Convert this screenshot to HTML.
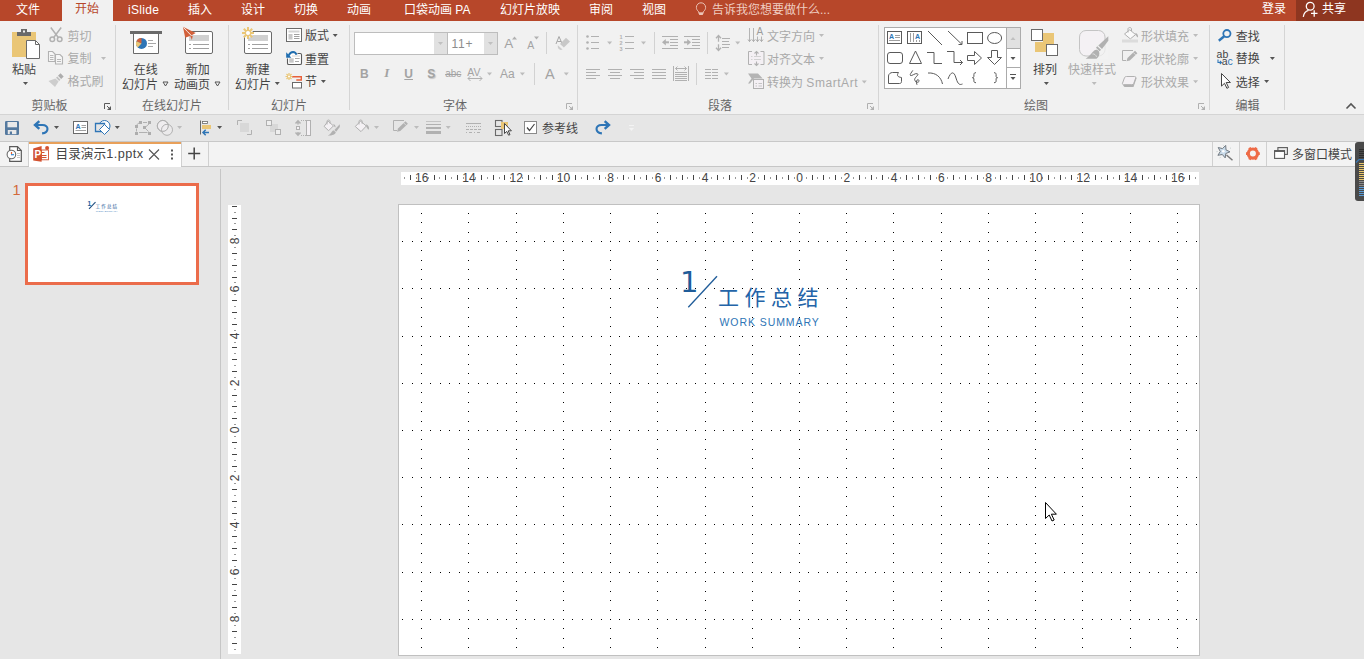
<!DOCTYPE html><html><head><meta charset="utf-8"><title>PowerPoint</title><style>
html,body{margin:0;padding:0}
body{width:1364px;height:659px;overflow:hidden;position:relative;background:#E6E6E6;
 font-family:"Liberation Sans","Noto Sans CJK SC",sans-serif;font-size:12px;color:#444}
.a{position:absolute}
.t{position:absolute;white-space:nowrap;line-height:16px;height:16px}
.d{color:#A9A9A9}
.d2{color:#A3A3A3}
.g{color:#666}
.w{color:#fff}
svg{position:absolute;left:0;top:0;overflow:visible}
</style></head><body><div class="a" style="left:0px;top:0px;width:1364px;height:21px;background:#B7472A;"></div>
<div class="a" style="left:62px;top:0px;width:51px;height:21px;background:#F1F1F1;"></div>
<div class="a" style="left:1296px;top:0px;width:68px;height:21px;background:#8E3620;"></div>
<div class="a" style="left:0px;top:21px;width:1364px;height:93px;background:#F1F1F1;"></div>
<div class="a" style="left:0px;top:114px;width:1364px;height:1px;background:#D4D4D4;"></div>
<div class="a" style="left:0px;top:115px;width:1364px;height:26px;background:#E6E6E6;"></div>
<div class="a" style="left:0px;top:141px;width:1364px;height:1px;background:#C8C8C8;"></div>
<div class="a" style="left:0px;top:142px;width:1364px;height:24px;background:#F3F3F3;"></div>
<div class="a" style="left:0px;top:166px;width:1364px;height:1px;background:#C6C6C6;"></div>
<div class="a" style="left:29px;top:142px;width:152px;height:25px;background:#FFFFFF;border-top:2px solid #E8A05A;box-sizing:border-box;"></div>
<div class="a" style="left:28px;top:142px;width:1px;height:24px;background:#D0D0D0;"></div>
<div class="a" style="left:181px;top:142px;width:1px;height:24px;background:#D0D0D0;"></div>
<div class="a" style="left:208px;top:142px;width:1px;height:24px;background:#D0D0D0;"></div>
<div class="a" style="left:1212px;top:142px;width:1px;height:24px;background:#D0D0D0;"></div>
<div class="a" style="left:1239px;top:142px;width:1px;height:24px;background:#D0D0D0;"></div>
<div class="a" style="left:1266px;top:142px;width:1px;height:24px;background:#D0D0D0;"></div>
<div class="a" style="left:220px;top:169px;width:1px;height:490px;background:#C6C6C6;"></div>
<div class="a" style="left:354px;top:32px;width:93px;height:23px;background:#fff;border:1px solid #BDBDBD;box-sizing:border-box;"></div>
<div class="a" style="left:434px;top:33px;width:13px;height:21px;background:#E1E1E1;"></div>
<div class="a" style="left:447px;top:32px;width:51px;height:23px;background:#fff;border:1px solid #BDBDBD;box-sizing:border-box;"></div>
<div class="a" style="left:484px;top:33px;width:13px;height:21px;background:#E1E1E1;"></div>
<div class="a" style="left:884px;top:27px;width:137px;height:62px;background:#fff;border:1px solid #ABABAB;box-sizing:border-box;"></div>
<div class="a" style="left:1006px;top:28px;width:14px;height:20px;background:#E1E1E1;"></div>
<div class="a" style="left:1006px;top:48px;width:14px;height:1px;background:#ABABAB;"></div>
<div class="a" style="left:1006px;top:67px;width:14px;height:1px;background:#ABABAB;"></div>
<div class="a" style="left:1006px;top:28px;width:1px;height:60px;background:#ABABAB;"></div>
<div class="t w" style="left:16px;top:2px;">文件</div>
<div class="t w" style="left:128px;top:2px;"><span style="letter-spacing:.3px">iSlide</span></div>
<div class="t w" style="left:188px;top:2px;">插入</div>
<div class="t w" style="left:241px;top:2px;">设计</div>
<div class="t w" style="left:294px;top:2px;">切换</div>
<div class="t w" style="left:347px;top:2px;">动画</div>
<div class="t w" style="left:404px;top:2px;">口袋动画 PA</div>
<div class="t w" style="left:500px;top:2px;">幻灯片放映</div>
<div class="t w" style="left:589px;top:2px;">审阅</div>
<div class="t w" style="left:642px;top:2px;">视图</div>
<div class="t w" style="left:1262px;top:1px;">登录</div>
<div class="t w" style="left:1322px;top:1px;">共享</div>
<div class="t " style="left:75px;top:1px;color:#B7472A;">开始</div>
<div class="t " style="left:712px;top:2px;color:#EFCDC1;">告诉我您想要做什么...</div>
<div class="a" style="left:115px;top:25px;width:1px;height:85px;background:#D5D5D5;"></div>
<div class="a" style="left:228px;top:25px;width:1px;height:85px;background:#D5D5D5;"></div>
<div class="a" style="left:349px;top:25px;width:1px;height:85px;background:#D5D5D5;"></div>
<div class="a" style="left:577px;top:25px;width:1px;height:85px;background:#D5D5D5;"></div>
<div class="a" style="left:878px;top:25px;width:1px;height:85px;background:#D5D5D5;"></div>
<div class="a" style="left:1209px;top:25px;width:1px;height:85px;background:#D5D5D5;"></div>
<div class="a" style="left:1284px;top:25px;width:1px;height:85px;background:#D5D5D5;"></div>
<div class="a" style="left:546px;top:32px;width:1px;height:22px;background:#D2D2D2;"></div>
<div class="a" style="left:654px;top:32px;width:1px;height:22px;background:#D2D2D2;"></div>
<div class="a" style="left:707px;top:32px;width:1px;height:22px;background:#D2D2D2;"></div>
<div class="a" style="left:534px;top:63px;width:1px;height:22px;background:#D2D2D2;"></div>
<div class="a" style="left:696px;top:63px;width:1px;height:22px;background:#D2D2D2;"></div>
<div class="t g" style="left:31.5px;top:98px;">剪贴板</div>
<div class="t g" style="left:142px;top:98px;">在线幻灯片</div>
<div class="t g" style="left:271px;top:98px;">幻灯片</div>
<div class="t g" style="left:443px;top:98px;">字体</div>
<div class="t g" style="left:708px;top:98px;">段落</div>
<div class="t g" style="left:1024px;top:98px;">绘图</div>
<div class="t g" style="left:1235.5px;top:98px;">编辑</div>
<div class="t " style="left:12px;top:62px;">粘贴</div>
<div class="t d" style="left:67.5px;top:29px;">剪切</div>
<div class="t d" style="left:67.5px;top:51px;">复制</div>
<div class="t d" style="left:67.5px;top:74px;">格式刷</div>
<div class="t " style="left:133.8px;top:62px;">在线</div>
<div class="t " style="left:122px;top:77px;">幻灯片</div>
<div class="t " style="left:185.8px;top:62px;">新加</div>
<div class="t " style="left:174px;top:77px;">动画页</div>
<div class="t " style="left:245.8px;top:62px;">新建</div>
<div class="t " style="left:235px;top:77px;">幻灯片</div>
<div class="t " style="left:305px;top:28px;">版式</div>
<div class="t " style="left:305px;top:52px;">重置</div>
<div class="t " style="left:305px;top:74px;">节</div>
<div class="t d" style="left:767px;top:29px;">文字方向</div>
<div class="t d" style="left:767px;top:52px;">对齐文本</div>
<div class="t d" style="left:767px;top:75px;">转换为 <span style="letter-spacing:.55px">SmartArt</span></div>
<div class="t " style="left:1033px;top:62px;">排列</div>
<div class="t d" style="left:1068px;top:62px;">快速样式</div>
<div class="t d" style="left:1141px;top:29px;">形状填充</div>
<div class="t d" style="left:1141px;top:52px;">形状轮廓</div>
<div class="t d" style="left:1141px;top:75px;">形状效果</div>
<div class="t " style="left:1235.7px;top:29px;">查找</div>
<div class="t " style="left:1235.7px;top:51px;">替换</div>
<div class="t " style="left:1235.7px;top:75px;">选择</div>
<div class="t " style="left:451.5px;top:35.64px;font-size:12px;color:#8C8C8C;letter-spacing:.8px;">11+</div>
<div class="t d2" style="left:360px;top:65.54px;font-size:12px;font-weight:bold;">B</div>
<div class="t d2" style="left:384.3px;top:65.20px;font-size:13px;font-style:italic;font-weight:bold;font-family:'Liberation Serif',serif;">I</div>
<div class="t d2" style="left:404.3px;top:65.54px;font-size:12px;font-weight:bold;text-decoration:underline;">U</div>
<div class="t d2" style="left:427.2px;top:65.54px;font-size:12px;font-weight:bold;text-shadow:1px 1px 1px #c4c4c4;">S</div>
<div class="t d2" style="left:445.2px;top:66.23px;font-size:10px;text-decoration:line-through;">abc</div>
<div class="t d2" style="left:467.3px;top:63.56px;font-size:10.5px;">AV</div>
<div class="t d2" style="left:500px;top:65.54px;font-size:12px;">Aa</div>
<div class="t d2" style="left:545px;top:65.78px;font-size:14.5px;">A</div>
<div class="t d2" style="left:504.2px;top:36.12px;font-size:13.5px;">A</div>
<div class="t d2" style="left:527.2px;top:37.16px;font-size:10.5px;">A</div>
<div class="t " style="left:542px;top:121px;">参考线</div>
<div class="t " style="left:55.5px;top:146px;font-size:12.7px;">目录演示<span style="letter-spacing:.45px">1.pptx</span></div>
<div class="t " style="left:1292px;top:147px;">多窗口模式</div>
<div class="t " style="left:12.5px;top:181.58px;font-size:14.5px;color:#D2693A;">1</div>
<div class="a" style="left:25px;top:183px;width:174px;height:102px;background:#fff;border:3px solid #EB6C4B;box-sizing:border-box;"></div>
<div class="a" style="left:401px;top:172px;width:798px;height:13px;background:#fff;"></div>
<div class="a" style="left:228px;top:205px;width:13px;height:449px;background:#fff;"></div>
<div class="a" style="left:398px;top:204px;width:802px;height:452px;background:#fff;border:1px solid #C0C0C0;box-sizing:border-box;"></div>
<svg width="1364" height="659" shape-rendering="crispEdges"><path d="M402 241.5h1M402 288.5h1M402 336.5h1M402 383.5h1M402 430.5h1M402 477.5h1M402 524.5h1M402 572.5h1M402 619.5h1M412 241.5h1M412 288.5h1M412 336.5h1M412 383.5h1M412 430.5h1M412 477.5h1M412 524.5h1M412 572.5h1M412 619.5h1M421 213.5h1M421 222.5h1M421 232.5h1M421 241.5h1M421 250.5h1M421 260.5h1M421 269.5h1M421 279.5h1M421 288.5h1M421 298.5h1M421 307.5h1M421 317.5h1M421 326.5h1M421 336.5h1M421 345.5h1M421 354.5h1M421 364.5h1M421 373.5h1M421 383.5h1M421 392.5h1M421 402.5h1M421 411.5h1M421 421.5h1M421 430.5h1M421 439.5h1M421 449.5h1M421 458.5h1M421 468.5h1M421 477.5h1M421 487.5h1M421 496.5h1M421 506.5h1M421 515.5h1M421 524.5h1M421 534.5h1M421 543.5h1M421 553.5h1M421 562.5h1M421 572.5h1M421 581.5h1M421 591.5h1M421 600.5h1M421 610.5h1M421 619.5h1M421 628.5h1M421 638.5h1M421 647.5h1M430 241.5h1M430 288.5h1M430 336.5h1M430 383.5h1M430 430.5h1M430 477.5h1M430 524.5h1M430 572.5h1M430 619.5h1M440 241.5h1M440 288.5h1M440 336.5h1M440 383.5h1M440 430.5h1M440 477.5h1M440 524.5h1M440 572.5h1M440 619.5h1M449 241.5h1M449 288.5h1M449 336.5h1M449 383.5h1M449 430.5h1M449 477.5h1M449 524.5h1M449 572.5h1M449 619.5h1M459 241.5h1M459 288.5h1M459 336.5h1M459 383.5h1M459 430.5h1M459 477.5h1M459 524.5h1M459 572.5h1M459 619.5h1M468 213.5h1M468 222.5h1M468 232.5h1M468 241.5h1M468 250.5h1M468 260.5h1M468 269.5h1M468 279.5h1M468 288.5h1M468 298.5h1M468 307.5h1M468 317.5h1M468 326.5h1M468 336.5h1M468 345.5h1M468 354.5h1M468 364.5h1M468 373.5h1M468 383.5h1M468 392.5h1M468 402.5h1M468 411.5h1M468 421.5h1M468 430.5h1M468 439.5h1M468 449.5h1M468 458.5h1M468 468.5h1M468 477.5h1M468 487.5h1M468 496.5h1M468 506.5h1M468 515.5h1M468 524.5h1M468 534.5h1M468 543.5h1M468 553.5h1M468 562.5h1M468 572.5h1M468 581.5h1M468 591.5h1M468 600.5h1M468 610.5h1M468 619.5h1M468 628.5h1M468 638.5h1M468 647.5h1M478 241.5h1M478 288.5h1M478 336.5h1M478 383.5h1M478 430.5h1M478 477.5h1M478 524.5h1M478 572.5h1M478 619.5h1M487 241.5h1M487 288.5h1M487 336.5h1M487 383.5h1M487 430.5h1M487 477.5h1M487 524.5h1M487 572.5h1M487 619.5h1M497 241.5h1M497 288.5h1M497 336.5h1M497 383.5h1M497 430.5h1M497 477.5h1M497 524.5h1M497 572.5h1M497 619.5h1M506 241.5h1M506 288.5h1M506 336.5h1M506 383.5h1M506 430.5h1M506 477.5h1M506 524.5h1M506 572.5h1M506 619.5h1M516 213.5h1M516 222.5h1M516 232.5h1M516 241.5h1M516 250.5h1M516 260.5h1M516 269.5h1M516 279.5h1M516 288.5h1M516 298.5h1M516 307.5h1M516 317.5h1M516 326.5h1M516 336.5h1M516 345.5h1M516 354.5h1M516 364.5h1M516 373.5h1M516 383.5h1M516 392.5h1M516 402.5h1M516 411.5h1M516 421.5h1M516 430.5h1M516 439.5h1M516 449.5h1M516 458.5h1M516 468.5h1M516 477.5h1M516 487.5h1M516 496.5h1M516 506.5h1M516 515.5h1M516 524.5h1M516 534.5h1M516 543.5h1M516 553.5h1M516 562.5h1M516 572.5h1M516 581.5h1M516 591.5h1M516 600.5h1M516 610.5h1M516 619.5h1M516 628.5h1M516 638.5h1M516 647.5h1M525 241.5h1M525 288.5h1M525 336.5h1M525 383.5h1M525 430.5h1M525 477.5h1M525 524.5h1M525 572.5h1M525 619.5h1M534 241.5h1M534 288.5h1M534 336.5h1M534 383.5h1M534 430.5h1M534 477.5h1M534 524.5h1M534 572.5h1M534 619.5h1M544 241.5h1M544 288.5h1M544 336.5h1M544 383.5h1M544 430.5h1M544 477.5h1M544 524.5h1M544 572.5h1M544 619.5h1M553 241.5h1M553 288.5h1M553 336.5h1M553 383.5h1M553 430.5h1M553 477.5h1M553 524.5h1M553 572.5h1M553 619.5h1M563 213.5h1M563 222.5h1M563 232.5h1M563 241.5h1M563 250.5h1M563 260.5h1M563 269.5h1M563 279.5h1M563 288.5h1M563 298.5h1M563 307.5h1M563 317.5h1M563 326.5h1M563 336.5h1M563 345.5h1M563 354.5h1M563 364.5h1M563 373.5h1M563 383.5h1M563 392.5h1M563 402.5h1M563 411.5h1M563 421.5h1M563 430.5h1M563 439.5h1M563 449.5h1M563 458.5h1M563 468.5h1M563 477.5h1M563 487.5h1M563 496.5h1M563 506.5h1M563 515.5h1M563 524.5h1M563 534.5h1M563 543.5h1M563 553.5h1M563 562.5h1M563 572.5h1M563 581.5h1M563 591.5h1M563 600.5h1M563 610.5h1M563 619.5h1M563 628.5h1M563 638.5h1M563 647.5h1M572 241.5h1M572 288.5h1M572 336.5h1M572 383.5h1M572 430.5h1M572 477.5h1M572 524.5h1M572 572.5h1M572 619.5h1M582 241.5h1M582 288.5h1M582 336.5h1M582 383.5h1M582 430.5h1M582 477.5h1M582 524.5h1M582 572.5h1M582 619.5h1M591 241.5h1M591 288.5h1M591 336.5h1M591 383.5h1M591 430.5h1M591 477.5h1M591 524.5h1M591 572.5h1M591 619.5h1M601 241.5h1M601 288.5h1M601 336.5h1M601 383.5h1M601 430.5h1M601 477.5h1M601 524.5h1M601 572.5h1M601 619.5h1M610 213.5h1M610 222.5h1M610 232.5h1M610 241.5h1M610 250.5h1M610 260.5h1M610 269.5h1M610 279.5h1M610 288.5h1M610 298.5h1M610 307.5h1M610 317.5h1M610 326.5h1M610 336.5h1M610 345.5h1M610 354.5h1M610 364.5h1M610 373.5h1M610 383.5h1M610 392.5h1M610 402.5h1M610 411.5h1M610 421.5h1M610 430.5h1M610 439.5h1M610 449.5h1M610 458.5h1M610 468.5h1M610 477.5h1M610 487.5h1M610 496.5h1M610 506.5h1M610 515.5h1M610 524.5h1M610 534.5h1M610 543.5h1M610 553.5h1M610 562.5h1M610 572.5h1M610 581.5h1M610 591.5h1M610 600.5h1M610 610.5h1M610 619.5h1M610 628.5h1M610 638.5h1M610 647.5h1M619 241.5h1M619 288.5h1M619 336.5h1M619 383.5h1M619 430.5h1M619 477.5h1M619 524.5h1M619 572.5h1M619 619.5h1M629 241.5h1M629 288.5h1M629 336.5h1M629 383.5h1M629 430.5h1M629 477.5h1M629 524.5h1M629 572.5h1M629 619.5h1M638 241.5h1M638 288.5h1M638 336.5h1M638 383.5h1M638 430.5h1M638 477.5h1M638 524.5h1M638 572.5h1M638 619.5h1M648 241.5h1M648 288.5h1M648 336.5h1M648 383.5h1M648 430.5h1M648 477.5h1M648 524.5h1M648 572.5h1M648 619.5h1M657 213.5h1M657 222.5h1M657 232.5h1M657 241.5h1M657 250.5h1M657 260.5h1M657 269.5h1M657 279.5h1M657 288.5h1M657 298.5h1M657 307.5h1M657 317.5h1M657 326.5h1M657 336.5h1M657 345.5h1M657 354.5h1M657 364.5h1M657 373.5h1M657 383.5h1M657 392.5h1M657 402.5h1M657 411.5h1M657 421.5h1M657 430.5h1M657 439.5h1M657 449.5h1M657 458.5h1M657 468.5h1M657 477.5h1M657 487.5h1M657 496.5h1M657 506.5h1M657 515.5h1M657 524.5h1M657 534.5h1M657 543.5h1M657 553.5h1M657 562.5h1M657 572.5h1M657 581.5h1M657 591.5h1M657 600.5h1M657 610.5h1M657 619.5h1M657 628.5h1M657 638.5h1M657 647.5h1M667 241.5h1M667 288.5h1M667 336.5h1M667 383.5h1M667 430.5h1M667 477.5h1M667 524.5h1M667 572.5h1M667 619.5h1M676 241.5h1M676 288.5h1M676 336.5h1M676 383.5h1M676 430.5h1M676 477.5h1M676 524.5h1M676 572.5h1M676 619.5h1M686 241.5h1M686 288.5h1M686 336.5h1M686 383.5h1M686 430.5h1M686 477.5h1M686 524.5h1M686 572.5h1M686 619.5h1M695 241.5h1M695 288.5h1M695 336.5h1M695 383.5h1M695 430.5h1M695 477.5h1M695 524.5h1M695 572.5h1M695 619.5h1M705 213.5h1M705 222.5h1M705 232.5h1M705 241.5h1M705 250.5h1M705 260.5h1M705 269.5h1M705 279.5h1M705 288.5h1M705 298.5h1M705 307.5h1M705 317.5h1M705 326.5h1M705 336.5h1M705 345.5h1M705 354.5h1M705 364.5h1M705 373.5h1M705 383.5h1M705 392.5h1M705 402.5h1M705 411.5h1M705 421.5h1M705 430.5h1M705 439.5h1M705 449.5h1M705 458.5h1M705 468.5h1M705 477.5h1M705 487.5h1M705 496.5h1M705 506.5h1M705 515.5h1M705 524.5h1M705 534.5h1M705 543.5h1M705 553.5h1M705 562.5h1M705 572.5h1M705 581.5h1M705 591.5h1M705 600.5h1M705 610.5h1M705 619.5h1M705 628.5h1M705 638.5h1M705 647.5h1M714 241.5h1M714 288.5h1M714 336.5h1M714 383.5h1M714 430.5h1M714 477.5h1M714 524.5h1M714 572.5h1M714 619.5h1M723 241.5h1M723 288.5h1M723 336.5h1M723 383.5h1M723 430.5h1M723 477.5h1M723 524.5h1M723 572.5h1M723 619.5h1M733 241.5h1M733 288.5h1M733 336.5h1M733 383.5h1M733 430.5h1M733 477.5h1M733 524.5h1M733 572.5h1M733 619.5h1M742 241.5h1M742 288.5h1M742 336.5h1M742 383.5h1M742 430.5h1M742 477.5h1M742 524.5h1M742 572.5h1M742 619.5h1M752 213.5h1M752 222.5h1M752 232.5h1M752 241.5h1M752 250.5h1M752 260.5h1M752 269.5h1M752 279.5h1M752 288.5h1M752 298.5h1M752 307.5h1M752 317.5h1M752 326.5h1M752 336.5h1M752 345.5h1M752 354.5h1M752 364.5h1M752 373.5h1M752 383.5h1M752 392.5h1M752 402.5h1M752 411.5h1M752 421.5h1M752 430.5h1M752 439.5h1M752 449.5h1M752 458.5h1M752 468.5h1M752 477.5h1M752 487.5h1M752 496.5h1M752 506.5h1M752 515.5h1M752 524.5h1M752 534.5h1M752 543.5h1M752 553.5h1M752 562.5h1M752 572.5h1M752 581.5h1M752 591.5h1M752 600.5h1M752 610.5h1M752 619.5h1M752 628.5h1M752 638.5h1M752 647.5h1M761 241.5h1M761 288.5h1M761 336.5h1M761 383.5h1M761 430.5h1M761 477.5h1M761 524.5h1M761 572.5h1M761 619.5h1M771 241.5h1M771 288.5h1M771 336.5h1M771 383.5h1M771 430.5h1M771 477.5h1M771 524.5h1M771 572.5h1M771 619.5h1M780 241.5h1M780 288.5h1M780 336.5h1M780 383.5h1M780 430.5h1M780 477.5h1M780 524.5h1M780 572.5h1M780 619.5h1M790 241.5h1M790 288.5h1M790 336.5h1M790 383.5h1M790 430.5h1M790 477.5h1M790 524.5h1M790 572.5h1M790 619.5h1M799 213.5h1M799 222.5h1M799 232.5h1M799 241.5h1M799 250.5h1M799 260.5h1M799 269.5h1M799 279.5h1M799 288.5h1M799 298.5h1M799 307.5h1M799 317.5h1M799 326.5h1M799 336.5h1M799 345.5h1M799 354.5h1M799 364.5h1M799 373.5h1M799 383.5h1M799 392.5h1M799 402.5h1M799 411.5h1M799 421.5h1M799 430.5h1M799 439.5h1M799 449.5h1M799 458.5h1M799 468.5h1M799 477.5h1M799 487.5h1M799 496.5h1M799 506.5h1M799 515.5h1M799 524.5h1M799 534.5h1M799 543.5h1M799 553.5h1M799 562.5h1M799 572.5h1M799 581.5h1M799 591.5h1M799 600.5h1M799 610.5h1M799 619.5h1M799 628.5h1M799 638.5h1M799 647.5h1M808 241.5h1M808 288.5h1M808 336.5h1M808 383.5h1M808 430.5h1M808 477.5h1M808 524.5h1M808 572.5h1M808 619.5h1M818 241.5h1M818 288.5h1M818 336.5h1M818 383.5h1M818 430.5h1M818 477.5h1M818 524.5h1M818 572.5h1M818 619.5h1M827 241.5h1M827 288.5h1M827 336.5h1M827 383.5h1M827 430.5h1M827 477.5h1M827 524.5h1M827 572.5h1M827 619.5h1M837 241.5h1M837 288.5h1M837 336.5h1M837 383.5h1M837 430.5h1M837 477.5h1M837 524.5h1M837 572.5h1M837 619.5h1M846 213.5h1M846 222.5h1M846 232.5h1M846 241.5h1M846 250.5h1M846 260.5h1M846 269.5h1M846 279.5h1M846 288.5h1M846 298.5h1M846 307.5h1M846 317.5h1M846 326.5h1M846 336.5h1M846 345.5h1M846 354.5h1M846 364.5h1M846 373.5h1M846 383.5h1M846 392.5h1M846 402.5h1M846 411.5h1M846 421.5h1M846 430.5h1M846 439.5h1M846 449.5h1M846 458.5h1M846 468.5h1M846 477.5h1M846 487.5h1M846 496.5h1M846 506.5h1M846 515.5h1M846 524.5h1M846 534.5h1M846 543.5h1M846 553.5h1M846 562.5h1M846 572.5h1M846 581.5h1M846 591.5h1M846 600.5h1M846 610.5h1M846 619.5h1M846 628.5h1M846 638.5h1M846 647.5h1M856 241.5h1M856 288.5h1M856 336.5h1M856 383.5h1M856 430.5h1M856 477.5h1M856 524.5h1M856 572.5h1M856 619.5h1M865 241.5h1M865 288.5h1M865 336.5h1M865 383.5h1M865 430.5h1M865 477.5h1M865 524.5h1M865 572.5h1M865 619.5h1M875 241.5h1M875 288.5h1M875 336.5h1M875 383.5h1M875 430.5h1M875 477.5h1M875 524.5h1M875 572.5h1M875 619.5h1M884 241.5h1M884 288.5h1M884 336.5h1M884 383.5h1M884 430.5h1M884 477.5h1M884 524.5h1M884 572.5h1M884 619.5h1M893 213.5h1M893 222.5h1M893 232.5h1M893 241.5h1M893 250.5h1M893 260.5h1M893 269.5h1M893 279.5h1M893 288.5h1M893 298.5h1M893 307.5h1M893 317.5h1M893 326.5h1M893 336.5h1M893 345.5h1M893 354.5h1M893 364.5h1M893 373.5h1M893 383.5h1M893 392.5h1M893 402.5h1M893 411.5h1M893 421.5h1M893 430.5h1M893 439.5h1M893 449.5h1M893 458.5h1M893 468.5h1M893 477.5h1M893 487.5h1M893 496.5h1M893 506.5h1M893 515.5h1M893 524.5h1M893 534.5h1M893 543.5h1M893 553.5h1M893 562.5h1M893 572.5h1M893 581.5h1M893 591.5h1M893 600.5h1M893 610.5h1M893 619.5h1M893 628.5h1M893 638.5h1M893 647.5h1M903 241.5h1M903 288.5h1M903 336.5h1M903 383.5h1M903 430.5h1M903 477.5h1M903 524.5h1M903 572.5h1M903 619.5h1M912 241.5h1M912 288.5h1M912 336.5h1M912 383.5h1M912 430.5h1M912 477.5h1M912 524.5h1M912 572.5h1M912 619.5h1M922 241.5h1M922 288.5h1M922 336.5h1M922 383.5h1M922 430.5h1M922 477.5h1M922 524.5h1M922 572.5h1M922 619.5h1M931 241.5h1M931 288.5h1M931 336.5h1M931 383.5h1M931 430.5h1M931 477.5h1M931 524.5h1M931 572.5h1M931 619.5h1M941 213.5h1M941 222.5h1M941 232.5h1M941 241.5h1M941 250.5h1M941 260.5h1M941 269.5h1M941 279.5h1M941 288.5h1M941 298.5h1M941 307.5h1M941 317.5h1M941 326.5h1M941 336.5h1M941 345.5h1M941 354.5h1M941 364.5h1M941 373.5h1M941 383.5h1M941 392.5h1M941 402.5h1M941 411.5h1M941 421.5h1M941 430.5h1M941 439.5h1M941 449.5h1M941 458.5h1M941 468.5h1M941 477.5h1M941 487.5h1M941 496.5h1M941 506.5h1M941 515.5h1M941 524.5h1M941 534.5h1M941 543.5h1M941 553.5h1M941 562.5h1M941 572.5h1M941 581.5h1M941 591.5h1M941 600.5h1M941 610.5h1M941 619.5h1M941 628.5h1M941 638.5h1M941 647.5h1M950 241.5h1M950 288.5h1M950 336.5h1M950 383.5h1M950 430.5h1M950 477.5h1M950 524.5h1M950 572.5h1M950 619.5h1M960 241.5h1M960 288.5h1M960 336.5h1M960 383.5h1M960 430.5h1M960 477.5h1M960 524.5h1M960 572.5h1M960 619.5h1M969 241.5h1M969 288.5h1M969 336.5h1M969 383.5h1M969 430.5h1M969 477.5h1M969 524.5h1M969 572.5h1M969 619.5h1M979 241.5h1M979 288.5h1M979 336.5h1M979 383.5h1M979 430.5h1M979 477.5h1M979 524.5h1M979 572.5h1M979 619.5h1M988 213.5h1M988 222.5h1M988 232.5h1M988 241.5h1M988 250.5h1M988 260.5h1M988 269.5h1M988 279.5h1M988 288.5h1M988 298.5h1M988 307.5h1M988 317.5h1M988 326.5h1M988 336.5h1M988 345.5h1M988 354.5h1M988 364.5h1M988 373.5h1M988 383.5h1M988 392.5h1M988 402.5h1M988 411.5h1M988 421.5h1M988 430.5h1M988 439.5h1M988 449.5h1M988 458.5h1M988 468.5h1M988 477.5h1M988 487.5h1M988 496.5h1M988 506.5h1M988 515.5h1M988 524.5h1M988 534.5h1M988 543.5h1M988 553.5h1M988 562.5h1M988 572.5h1M988 581.5h1M988 591.5h1M988 600.5h1M988 610.5h1M988 619.5h1M988 628.5h1M988 638.5h1M988 647.5h1M997 241.5h1M997 288.5h1M997 336.5h1M997 383.5h1M997 430.5h1M997 477.5h1M997 524.5h1M997 572.5h1M997 619.5h1M1007 241.5h1M1007 288.5h1M1007 336.5h1M1007 383.5h1M1007 430.5h1M1007 477.5h1M1007 524.5h1M1007 572.5h1M1007 619.5h1M1016 241.5h1M1016 288.5h1M1016 336.5h1M1016 383.5h1M1016 430.5h1M1016 477.5h1M1016 524.5h1M1016 572.5h1M1016 619.5h1M1026 241.5h1M1026 288.5h1M1026 336.5h1M1026 383.5h1M1026 430.5h1M1026 477.5h1M1026 524.5h1M1026 572.5h1M1026 619.5h1M1035 213.5h1M1035 222.5h1M1035 232.5h1M1035 241.5h1M1035 250.5h1M1035 260.5h1M1035 269.5h1M1035 279.5h1M1035 288.5h1M1035 298.5h1M1035 307.5h1M1035 317.5h1M1035 326.5h1M1035 336.5h1M1035 345.5h1M1035 354.5h1M1035 364.5h1M1035 373.5h1M1035 383.5h1M1035 392.5h1M1035 402.5h1M1035 411.5h1M1035 421.5h1M1035 430.5h1M1035 439.5h1M1035 449.5h1M1035 458.5h1M1035 468.5h1M1035 477.5h1M1035 487.5h1M1035 496.5h1M1035 506.5h1M1035 515.5h1M1035 524.5h1M1035 534.5h1M1035 543.5h1M1035 553.5h1M1035 562.5h1M1035 572.5h1M1035 581.5h1M1035 591.5h1M1035 600.5h1M1035 610.5h1M1035 619.5h1M1035 628.5h1M1035 638.5h1M1035 647.5h1M1045 241.5h1M1045 288.5h1M1045 336.5h1M1045 383.5h1M1045 430.5h1M1045 477.5h1M1045 524.5h1M1045 572.5h1M1045 619.5h1M1054 241.5h1M1054 288.5h1M1054 336.5h1M1054 383.5h1M1054 430.5h1M1054 477.5h1M1054 524.5h1M1054 572.5h1M1054 619.5h1M1064 241.5h1M1064 288.5h1M1064 336.5h1M1064 383.5h1M1064 430.5h1M1064 477.5h1M1064 524.5h1M1064 572.5h1M1064 619.5h1M1073 241.5h1M1073 288.5h1M1073 336.5h1M1073 383.5h1M1073 430.5h1M1073 477.5h1M1073 524.5h1M1073 572.5h1M1073 619.5h1M1082 213.5h1M1082 222.5h1M1082 232.5h1M1082 241.5h1M1082 250.5h1M1082 260.5h1M1082 269.5h1M1082 279.5h1M1082 288.5h1M1082 298.5h1M1082 307.5h1M1082 317.5h1M1082 326.5h1M1082 336.5h1M1082 345.5h1M1082 354.5h1M1082 364.5h1M1082 373.5h1M1082 383.5h1M1082 392.5h1M1082 402.5h1M1082 411.5h1M1082 421.5h1M1082 430.5h1M1082 439.5h1M1082 449.5h1M1082 458.5h1M1082 468.5h1M1082 477.5h1M1082 487.5h1M1082 496.5h1M1082 506.5h1M1082 515.5h1M1082 524.5h1M1082 534.5h1M1082 543.5h1M1082 553.5h1M1082 562.5h1M1082 572.5h1M1082 581.5h1M1082 591.5h1M1082 600.5h1M1082 610.5h1M1082 619.5h1M1082 628.5h1M1082 638.5h1M1082 647.5h1M1092 241.5h1M1092 288.5h1M1092 336.5h1M1092 383.5h1M1092 430.5h1M1092 477.5h1M1092 524.5h1M1092 572.5h1M1092 619.5h1M1101 241.5h1M1101 288.5h1M1101 336.5h1M1101 383.5h1M1101 430.5h1M1101 477.5h1M1101 524.5h1M1101 572.5h1M1101 619.5h1M1111 241.5h1M1111 288.5h1M1111 336.5h1M1111 383.5h1M1111 430.5h1M1111 477.5h1M1111 524.5h1M1111 572.5h1M1111 619.5h1M1120 241.5h1M1120 288.5h1M1120 336.5h1M1120 383.5h1M1120 430.5h1M1120 477.5h1M1120 524.5h1M1120 572.5h1M1120 619.5h1M1130 213.5h1M1130 222.5h1M1130 232.5h1M1130 241.5h1M1130 250.5h1M1130 260.5h1M1130 269.5h1M1130 279.5h1M1130 288.5h1M1130 298.5h1M1130 307.5h1M1130 317.5h1M1130 326.5h1M1130 336.5h1M1130 345.5h1M1130 354.5h1M1130 364.5h1M1130 373.5h1M1130 383.5h1M1130 392.5h1M1130 402.5h1M1130 411.5h1M1130 421.5h1M1130 430.5h1M1130 439.5h1M1130 449.5h1M1130 458.5h1M1130 468.5h1M1130 477.5h1M1130 487.5h1M1130 496.5h1M1130 506.5h1M1130 515.5h1M1130 524.5h1M1130 534.5h1M1130 543.5h1M1130 553.5h1M1130 562.5h1M1130 572.5h1M1130 581.5h1M1130 591.5h1M1130 600.5h1M1130 610.5h1M1130 619.5h1M1130 628.5h1M1130 638.5h1M1130 647.5h1M1139 241.5h1M1139 288.5h1M1139 336.5h1M1139 383.5h1M1139 430.5h1M1139 477.5h1M1139 524.5h1M1139 572.5h1M1139 619.5h1M1149 241.5h1M1149 288.5h1M1149 336.5h1M1149 383.5h1M1149 430.5h1M1149 477.5h1M1149 524.5h1M1149 572.5h1M1149 619.5h1M1158 241.5h1M1158 288.5h1M1158 336.5h1M1158 383.5h1M1158 430.5h1M1158 477.5h1M1158 524.5h1M1158 572.5h1M1158 619.5h1M1168 241.5h1M1168 288.5h1M1168 336.5h1M1168 383.5h1M1168 430.5h1M1168 477.5h1M1168 524.5h1M1168 572.5h1M1168 619.5h1M1177 213.5h1M1177 222.5h1M1177 232.5h1M1177 241.5h1M1177 250.5h1M1177 260.5h1M1177 269.5h1M1177 279.5h1M1177 288.5h1M1177 298.5h1M1177 307.5h1M1177 317.5h1M1177 326.5h1M1177 336.5h1M1177 345.5h1M1177 354.5h1M1177 364.5h1M1177 373.5h1M1177 383.5h1M1177 392.5h1M1177 402.5h1M1177 411.5h1M1177 421.5h1M1177 430.5h1M1177 439.5h1M1177 449.5h1M1177 458.5h1M1177 468.5h1M1177 477.5h1M1177 487.5h1M1177 496.5h1M1177 506.5h1M1177 515.5h1M1177 524.5h1M1177 534.5h1M1177 543.5h1M1177 553.5h1M1177 562.5h1M1177 572.5h1M1177 581.5h1M1177 591.5h1M1177 600.5h1M1177 610.5h1M1177 619.5h1M1177 628.5h1M1177 638.5h1M1177 647.5h1M1186 241.5h1M1186 288.5h1M1186 336.5h1M1186 383.5h1M1186 430.5h1M1186 477.5h1M1186 524.5h1M1186 572.5h1M1186 619.5h1M1196 241.5h1M1196 288.5h1M1196 336.5h1M1196 383.5h1M1196 430.5h1M1196 477.5h1M1196 524.5h1M1196 572.5h1M1196 619.5h1" stroke="#000" stroke-width="1" fill="none"/></svg>
<svg width="1364" height="659" shape-rendering="crispEdges"><path d="M410.5 175v5M434.5 175v5M445.5 175v5M457.5 175v5M481.5 175v5M493.5 175v5M504.5 175v5M528.5 175v5M540.5 175v5M552.5 175v5M575.5 175v5M587.5 175v5M599.5 175v5M623.5 175v5M634.5 175v5M646.5 175v5M670.5 175v5M682.5 175v5M693.5 175v5M717.5 175v5M729.5 175v5M741.5 175v5M764.5 175v5M776.5 175v5M788.5 175v5M812.5 175v5M823.5 175v5M835.5 175v5M859.5 175v5M871.5 175v5M882.5 175v5M906.5 175v5M918.5 175v5M930.5 175v5M953.5 175v5M965.5 175v5M977.5 175v5M1000.5 175v5M1012.5 175v5M1024.5 175v5M1048.5 175v5M1060.5 175v5M1071.5 175v5M1095.5 175v5M1107.5 175v5M1119.5 175v5M1142.5 175v5M1154.5 175v5M1166.5 175v5M1189.5 175v5M232 206.5h5M232 218.5h5M232 229.5h5M232 253.5h5M232 265.5h5M232 277.5h5M232 300.5h5M232 312.5h5M232 324.5h5M232 347.5h5M232 359.5h5M232 371.5h5M232 395.5h5M232 406.5h5M232 418.5h5M232 442.5h5M232 454.5h5M232 466.5h5M232 489.5h5M232 501.5h5M232 513.5h5M232 536.5h5M232 548.5h5M232 560.5h5M232 584.5h5M232 595.5h5M232 607.5h5M232 631.5h5M232 643.5h5" stroke="#444" stroke-width="1" fill="none"/><path d="M404.5 177v2M416.5 177v2M428.5 177v2M439.5 177v2M451.5 177v2M463.5 177v2M475.5 177v2M487.5 177v2M499.5 177v2M510.5 177v2M522.5 177v2M534.5 177v2M546.5 177v2M558.5 177v2M569.5 177v2M581.5 177v2M593.5 177v2M605.5 177v2M617.5 177v2M628.5 177v2M640.5 177v2M652.5 177v2M664.5 177v2M676.5 177v2M687.5 177v2M699.5 177v2M711.5 177v2M723.5 177v2M735.5 177v2M747.5 177v2M758.5 177v2M770.5 177v2M782.5 177v2M794.5 177v2M806.5 177v2M817.5 177v2M829.5 177v2M841.5 177v2M853.5 177v2M865.5 177v2M876.5 177v2M888.5 177v2M900.5 177v2M912.5 177v2M924.5 177v2M936.5 177v2M947.5 177v2M959.5 177v2M971.5 177v2M983.5 177v2M995.5 177v2M1006.5 177v2M1018.5 177v2M1030.5 177v2M1042.5 177v2M1054.5 177v2M1065.5 177v2M1077.5 177v2M1089.5 177v2M1101.5 177v2M1113.5 177v2M1125.5 177v2M1136.5 177v2M1148.5 177v2M1160.5 177v2M1172.5 177v2M1184.5 177v2M1195.5 177v2M234 212.5h2M234 223.5h2M234 235.5h2M234 247.5h2M234 259.5h2M234 271.5h2M234 282.5h2M234 294.5h2M234 306.5h2M234 318.5h2M234 330.5h2M234 342.5h2M234 353.5h2M234 365.5h2M234 377.5h2M234 389.5h2M234 401.5h2M234 412.5h2M234 424.5h2M234 436.5h2M234 448.5h2M234 460.5h2M234 471.5h2M234 483.5h2M234 495.5h2M234 507.5h2M234 519.5h2M234 530.5h2M234 542.5h2M234 554.5h2M234 566.5h2M234 578.5h2M234 590.5h2M234 601.5h2M234 613.5h2M234 625.5h2M234 637.5h2M234 649.5h2" stroke="#999" stroke-width="1" fill="none"/></svg>
<div class="t" style="left:406.7px;top:169.5px;width:30px;text-align:center;">16</div>
<div class="t" style="left:454.0px;top:169.5px;width:30px;text-align:center;">14</div>
<div class="t" style="left:501.2px;top:169.5px;width:30px;text-align:center;">12</div>
<div class="t" style="left:548.5px;top:169.5px;width:30px;text-align:center;">10</div>
<div class="t" style="left:595.7px;top:169.5px;width:30px;text-align:center;">8</div>
<div class="t" style="left:643.0px;top:169.5px;width:30px;text-align:center;">6</div>
<div class="t" style="left:690.2px;top:169.5px;width:30px;text-align:center;">4</div>
<div class="t" style="left:737.5px;top:169.5px;width:30px;text-align:center;">2</div>
<div class="t" style="left:784.7px;top:169.5px;width:30px;text-align:center;">0</div>
<div class="t" style="left:831.9px;top:169.5px;width:30px;text-align:center;">2</div>
<div class="t" style="left:879.2px;top:169.5px;width:30px;text-align:center;">4</div>
<div class="t" style="left:926.4px;top:169.5px;width:30px;text-align:center;">6</div>
<div class="t" style="left:973.7px;top:169.5px;width:30px;text-align:center;">8</div>
<div class="t" style="left:1020.9px;top:169.5px;width:30px;text-align:center;">10</div>
<div class="t" style="left:1068.2px;top:169.5px;width:30px;text-align:center;">12</div>
<div class="t" style="left:1115.4px;top:169.5px;width:30px;text-align:center;">14</div>
<div class="t" style="left:1162.7px;top:169.5px;width:30px;text-align:center;">16</div>
<div class="t" style="left:219.5px;top:233.3px;width:30px;text-align:center;transform:rotate(-90deg);">8</div>
<div class="t" style="left:219.5px;top:280.6px;width:30px;text-align:center;transform:rotate(-90deg);">6</div>
<div class="t" style="left:219.5px;top:327.8px;width:30px;text-align:center;transform:rotate(-90deg);">4</div>
<div class="t" style="left:219.5px;top:375.1px;width:30px;text-align:center;transform:rotate(-90deg);">2</div>
<div class="t" style="left:219.5px;top:422.3px;width:30px;text-align:center;transform:rotate(-90deg);">0</div>
<div class="t" style="left:219.5px;top:469.5px;width:30px;text-align:center;transform:rotate(-90deg);">2</div>
<div class="t" style="left:219.5px;top:516.8px;width:30px;text-align:center;transform:rotate(-90deg);">4</div>
<div class="t" style="left:219.5px;top:564.0px;width:30px;text-align:center;transform:rotate(-90deg);">6</div>
<div class="t" style="left:219.5px;top:611.3px;width:30px;text-align:center;transform:rotate(-90deg);">8</div>
<div class="t" style="left:680px;top:265px;font-family:'DejaVu Sans',sans-serif;font-size:29px;line-height:34px;height:34px;color:#1F5C99;">1</div>
<svg width="1364" height="659"><path d="M688.3 307.3L717 276.3" stroke="#1F5C99" stroke-width="1.3" fill="none"/></svg>
<div class="t" style="left:718px;top:283px;font-size:21px;line-height:30px;height:30px;letter-spacing:5.5px;color:#2464A8;">工作总结</div>
<div class="t" style="left:719.5px;top:313.5px;font-size:10.5px;letter-spacing:0.93px;color:#2E75B6;">WORK SUMMARY</div>
<div class="t" style="left:87.5px;top:199px;font-size:6.5px;font-weight:bold;line-height:10px;height:10px;color:#1F5C99;">1</div>
<svg width="1364" height="659"><path d="M89 208.800L95.500 202.200" stroke="#1F4E80" stroke-width="1.100" fill="none"/></svg>
<div class="t" style="left:95.5px;top:202px;font-size:4.6px;line-height:10px;height:10px;letter-spacing:1.1px;color:#1F5C99;">工作总结</div>
<div class="t" style="left:95.8px;top:206px;font-size:2.3px;line-height:10px;height:10px;letter-spacing:0.2px;color:#2E75B6;">WORK SUMMARY</div>
<svg width="1364" height="659" fill="none"><g stroke="#EBC4B6" fill="none" stroke-width="1"><path d="M698.700 11.800c-1.600-1.400-2.300-2.800-2.300-4.400a4.600 4.600 0 0 1 9.200 0c0 1.600-.7 3-2.300 4.400v1h-4.600z"/></g><path d="M698.500 13h5l-.8 2h-3.400z" fill="#EBC4B6"/><g stroke="#fff" fill="none" stroke-width="1.300"><circle cx="1310.200" cy="6.300" r="3.900"/><path d="M1303.300 16.800c.5-3.800 2.700-5.800 5.200-6.500"/><path d="M1314.200 10.200v6.500M1311 13.400h6.500"/></g><rect x="12" y="32" width="24" height="25" fill="#EAC676"/><path d="M17 32h4v-3h6v3h4v4h-14z" fill="#6A6A6A"/><rect x="23" y="30.500" width="2" height="2" fill="#F1F1F1"/><path d="M26.500 40.500h9l4 4v14h-13z" fill="#fff" stroke="#6A6A6A"/><path d="M35.500 40.500v4h4" stroke="#6A6A6A"/><path d="M23.0 82.0h5l-2.5 3.0z" fill="#555"/><g stroke="#B1B1B1" stroke-width="1.500" fill="none"><path d="M50.800 27.500l7.500 10M61.200 27.500l-7.500 10"/><circle cx="52.300" cy="39.200" r="2.300"/><circle cx="59.700" cy="39.200" r="2.300"/></g><g stroke="#B2B2B2" fill="#F6F6F6" stroke-width="1.100"><path d="M48.500 51.500h4l2.500 2.500v7.500h-6.500z"/><path d="M55.500 54.500h4.500l2.500 2.500v7h-7z"/></g><path d="M50 55.500h3.500M50 57.500h3.500M50 59.500h3.500M57 59.500h4M57 61.500h4" stroke="#B8B8B8"/><path d="M101.0 57.0h5l-2.5 3.0z" fill="#BCBCBC"/><path d="M60.500 73.300l3.200 3.200-2.500 2.500-3.200-3.200z" fill="#ADADAD"/><path d="M57.300 76.500l3.200 3.200-1.300 1.300-3.200-3.200z" fill="#C2C2C2"/><path d="M55.400 78.400l3.200 3.200-3.600 5.400-6.500-6z" fill="#CDCDCD"/><path d="M104.5 109V103.5H110" fill="none" stroke="#5A5A5A"/><path d="M111 106v4h-4z" fill="#5A5A5A"/><path d="M107 106l3 3" stroke="#5A5A5A"/><rect x="130" y="31" width="32" height="3" fill="#6A6A6A"/><path d="M133.500 34v19.500h25V34" fill="#fff" stroke="#6A6A6A"/><circle cx="141.500" cy="43.400" r="5.500" fill="#2E75B6"/><path d="M141.500 43.400V37.900a5.500 5.500 0 0 0-5.100 3.400z" fill="#D2603A"/><path d="M141.500 43.400l-5.100-2.100a5.500 5.500 0 0 0 1.400 6.200z" fill="#EAC676"/><path d="M148 40.500h5M148 43.500h8M148 46.500h5" stroke="#A8A8A8"/><path d="M163.0 82.0h5l-2.500 4z" fill="none" stroke="#555" stroke-width="1"/><rect x="185.500" y="31.500" width="27" height="22" rx="1.500" fill="#fff" stroke="#6A6A6A"/><rect x="189" y="35" width="20" height="6" fill="#D0D0D0"/><path d="M189 44.500h2M193 44.500h16M189 48.500h2M193 48.500h16" stroke="#A0A0A0"/><path d="M182.900 26.800l2.300 11 6-2.300z" fill="#D2603A"/><path d="M182.900 26.800l12.800 6.200-4.400 2.600z" fill="#D2603A"/><path d="M190 35.500l1.900 4.500 .8-4z" fill="#D2603A"/><path d="M183.500 27.500l8 8.300" stroke="#fff" stroke-width=".8"/><path d="M215.0 82.0h5l-2.500 4z" fill="none" stroke="#555" stroke-width="1"/><rect x="244.500" y="31.500" width="27" height="22" rx="1.500" fill="#fff" stroke="#6A6A6A"/><rect x="248" y="35" width="20" height="6" fill="#D0D0D0"/><path d="M248 44.500h2M252 44.500h16M248 48.500h2M252 48.500h16" stroke="#A0A0A0"/><circle cx="248" cy="33" r="5" fill="#F1F1F1"/><g stroke="#EAC676" stroke-width="2"><path d="M248 27v3.500M248 35.500v3.500M242 33h3.500M250.500 33h3.500M243.800 28.800l2.400 2.400M249.800 34.800l2.400 2.400M252.200 28.800l-2.400 2.400M246.200 34.800l-2.400 2.400"/></g><circle cx="248" cy="33" r="2.600" fill="none" stroke="#EAC676" stroke-width="1.200"/><circle cx="248" cy="33" r="1.800" fill="#fff"/><path d="M274.8 82.0h5l-2.5 3.0z" fill="#555"/><rect x="286.500" y="28.500" width="15" height="13" fill="#fff" stroke="#6A6A6A"/><rect x="288.500" y="30.500" width="11" height="2" fill="#D4D4D4"/><rect x="288.500" y="34" width="4" height="5.500" fill="#C8C8C8"/><path d="M294 34.500h5.500M294 36.500h5.500M294 38.500h5.500" stroke="#A0A0A0"/><path d="M332.7 34.0h5l-2.5 3.0z" fill="#555"/><rect x="288" y="54" width="13.500" height="10.500" fill="#fff"/><path d="M297.500 53.500h2.700a1.300 1.300 0 0 1 1.300 1.300v8.400a1.300 1.300 0 0 1-1.300 1.300h-11.400a1.300 1.300 0 0 1-1.300-1.300V58.500" stroke="#5A5A5A" stroke-width="1.100"/><path d="M292 56h8" stroke="#D4D4D4"/><rect x="289.200" y="58.300" width="4.500" height="4.400" fill="#C8C8C8"/><path d="M295 58.500h4.700M295 61.500h4" stroke="#A8A8A8"/><path d="M296.500 54.700c-1-3.300-5.500-4.300-7.800 .8" stroke="#1E6DB0" stroke-width="1.900"/><path d="M286.200 52.300v5.400h5.200z" fill="#1E6DB0"/><path d="M292 76.700h9.300v3.300h-5" stroke="#E8603A" stroke-width="1.400"/><rect x="292.500" y="82.500" width="9" height="5.500" fill="#fff" stroke="#6A6A6A"/><g stroke="#EAC676" stroke-width="1.200"><path d="M289 73v7M285.500 76.500h7M286.500 74l5 5M291.500 74l-5 5"/></g><circle cx="289" cy="76.500" r="1" fill="#fff"/><path d="M320.9 80.0h5l-2.5 3.0z" fill="#555"/><path d="M438.0 42.0h5l-2.5 3.0z" fill="#C0C0C0"/><path d="M488.0 42.0h5l-2.5 3.0z" fill="#C0C0C0"/><path d="M512 39.500l2.500-3 2.500 3z" fill="#B1B1B1"/><path d="M534 36.500h5l-2.500 3z" fill="#B1B1B1"/><path d="M556 44l3-7.500 2.800 6.500M557.300 41.500h3.800" stroke="#A6A6A6" stroke-width="1"/><path d="M566 37.800l4 3.600-6.100 6.200-3.900-3.700z" fill="#C8C8C8"/><path d="M557.800 45.300l4.800 4.100-2 .6c-1.200-.3-2.800-1.500-2.800-3z" fill="#CDCDCD"/><path d="M468 78.500h14M470.500 76l-2.500 2.500 2.500 2.500M479.500 76l2.500 2.500-2.500 2.500" stroke="#B1B1B1"/><path d="M487.0 72.5h5l-2.5 3.0z" fill="#BCBCBC"/><path d="M519.9 72.5h5l-2.5 3.0z" fill="#BCBCBC"/><path d="M563.8 72.5h5l-2.5 3.0z" fill="#BCBCBC"/><path d="M566.5 109V103.5H572" fill="none" stroke="#B0B0B0"/><path d="M573 106v4h-4z" fill="#B0B0B0"/><path d="M569 106l3 3" stroke="#B0B0B0"/><g fill="#B1B1B1"><circle cx="587.500" cy="36.500" r="1.300"/><circle cx="587.500" cy="42.500" r="1.300"/><circle cx="587.500" cy="48.500" r="1.300"/></g><path d="M591 36.500h8M591 42.500h8M591 48.500h8" stroke="#B1B1B1"/><path d="M607.1 41.5h5l-2.5 3.0z" fill="#BCBCBC"/><g font-size="5.500" fill="#B1B1B1" font-family="Liberation Sans,sans-serif" font-weight="bold"><text x="619.500" y="38.500">1</text><text x="619.500" y="44.500">2</text><text x="619.500" y="50.500">3</text></g><path d="M625 36.500h9M625 42.500h9M625 48.500h9" stroke="#B1B1B1"/><path d="M641.0 41.5h5l-2.5 3.0z" fill="#BCBCBC"/><path d="M662 36.500h16M670 39.500h8M670 42.500h8M670 45.500h8M662 48.500h16" stroke="#B1B1B1"/><path d="M664.500 42.300h4.500" stroke="#B1B1B1" stroke-width="2"/><path d="M662 42.300l3.800-3.300v6.600z" fill="#B1B1B1"/><path d="M684 36.500h16M692 39.500h8M692 42.500h8M692 45.500h8M684 48.500h16" stroke="#B1B1B1"/><path d="M684 42.300h4.500" stroke="#B1B1B1" stroke-width="2"/><path d="M691 42.300l-3.800-3.300v6.600z" fill="#B1B1B1"/><path d="M718.500 35.500v6.300M716 38.300l2.500-2.800 2.500 2.800M718.500 44.200v6.300M716 47.700l2.500 2.800 2.500-2.800" stroke="#B1B1B1" stroke-width="1.300"/><path d="M722 38.500h8M722 41.500h7M722 44.500h8M722 47.500h7" stroke="#B1B1B1"/><path d="M735.2 41.5h5l-2.5 3.0z" fill="#BCBCBC"/><path d="M586 69.5h14M586 72.5h10M586 75.5h14M586 78.5h10" stroke="#B1B1B1"/><path d="M608.0 69.5h14M610.0 72.5h10M608.0 75.5h14M610.0 78.5h10" stroke="#B1B1B1"/><path d="M630 69.5h14M634 72.5h10M630 75.5h14M634 78.5h10" stroke="#B1B1B1"/><path d="M652 69.5h14M652 72.5h14M652 75.5h14M652 78.5h14" stroke="#B1B1B1"/><path d="M673.500 66v15M688.500 66v15" stroke="#B1B1B1"/><path d="M675.500 68.500h11M677.500 66.500l-2 2 2 2M684.500 66.500l2 2-2 2" stroke="#B1B1B1"/><path d="M675 72.500h12M675 74.500h12M675 76.500h12M675 78.500h12M675 80.500h12" stroke="#B1B1B1"/><path d="M705 69.500h6M712 69.500h6M705 72.500h6M712 72.500h6M705 75.500h6M712 75.500h6M705 78.500h6M712 78.500h6" stroke="#B1B1B1"/><path d="M723.9 72.5h5l-2.5 3.0z" fill="#BCBCBC"/><path d="M749.500 28v13.500M753.500 28v13.500M757.500 36.500v5M761.500 36.500v5" stroke="#B4B4B4"/><path d="M748 39.500l1.500 2 1.500-2M752 39.500l1.500 2 1.500-2M756 39.500l1.500 2 1.500-2M760 39.500l1.500 2 1.500-2" stroke="#A8A8A8"/><text x="756.600" y="34.500" font-size="10" fill="#9C9C9C" font-family="Liberation Sans,sans-serif">A</text><path d="M819.0 34.0h5l-2.5 3.0z" fill="#BCBCBC"/><rect x="749" y="52" width="14" height="12" fill="#F4F0F4"/><path d="M752 51.500h-3.500v13h3.500M760.500 51.500h3.500v13h-3.500" stroke="#B1B1B1"/><path d="M756.500 51.500v4M754.500 53.500l2-2 2 2M756.500 65.500v-4M754.500 63.500l2 2 2-2" stroke="#B1B1B1" stroke-width="1.100"/><path d="M751 56.500h1.500M754 56.500h7M751 59.500h1.500M754 59.500h7" stroke="#D2D2D2"/><path d="M819.0 57.0h5l-2.5 3.0z" fill="#BCBCBC"/><path d="M748 73.500h10l4.700 5h-8.700l-4 5h-2l3.500-5z" fill="#B4B4B4"/><rect x="753.500" y="79.500" width="10" height="9" fill="#F4F0F4" stroke="#B1B1B1"/><path d="M755.500 83.500h1.500M758.500 83.500h3.500M755.500 86h1.500M758.500 86h3.500" stroke="#C4C4C4"/><path d="M861.8 80.5h5l-2.5 3.0z" fill="#BCBCBC"/><path d="M867.5 109V103.5H873" fill="none" stroke="#B0B0B0"/><path d="M874 106v4h-4z" fill="#B0B0B0"/><path d="M870 106l3 3" stroke="#B0B0B0"/><rect x="887.500" y="31.500" width="14" height="12" fill="#fff" stroke="#5A5A5A"/><text x="889" y="38.500" font-size="7" font-weight="bold" fill="#2E75B6" font-family="Liberation Sans,sans-serif">A</text><path d="M895 35.500h5M895 37.500h5M889 40.500h11" stroke="#A0A0A0"/><rect x="907.500" y="31.500" width="14" height="12" fill="#fff" stroke="#5A5A5A"/><text x="915" y="38.500" font-size="7" font-weight="bold" fill="#2E75B6" font-family="Liberation Sans,sans-serif">A</text><path d="M910.500 33v9M913.500 33v9M916.500 40v2M919.500 40v2" stroke="#A0A0A0"/><path d="M928 31l14 14" stroke="#5A5A5A"/><path d="M948 31l14 13.500M958.500 44.500h3.500v-3.500" stroke="#5A5A5A"/><rect x="967.500" y="32.500" width="15" height="11" stroke="#5A5A5A"/><ellipse cx="994.600" cy="38" rx="7" ry="5.500" stroke="#5A5A5A"/><rect x="887.500" y="52.500" width="15" height="11" rx="2.500" stroke="#5A5A5A"/><path d="M915.500 51l6 12.500h-12z" stroke="#5A5A5A"/><path d="M927 52.500h7v11h8" stroke="#5A5A5A"/><path d="M947 51.500h7v11h8.500M960 60l2.500 2.500-2.500 2.500" stroke="#5A5A5A"/><path d="M967.500 55.500h7v-4l7 6.500-7 6.500v-4h-7z" stroke="#5A5A5A"/><path d="M991.500 50.500h6v7h4l-7 7-7-7h4z" stroke="#5A5A5A"/><path d="M888.500 83.500v-7.500c0-2 2-3.500 4-3.500h6c-2 3-1 4.500 3 5v4c0 1.500-1 2-2 2z" stroke="#5A5A5A"/><path d="M912.800 70.400C911.500 72.500 909.500 74.500 910.500 75.500S915.500 72.500 917.500 73.800 913 78 915 80.800 919.800 82 918.800 80.200 915.300 81 917 84.800" stroke="#5A5A5A"/><path d="M928 73c8-.5 13 4 14.500 11" stroke="#5A5A5A"/><path d="M948 79c3-8 6-8 8-1s4 7 6.500 6" stroke="#5A5A5A"/><path d="M976 72.700c-1.600 0-2.100 .600-2.100 1.800v1.900c0 .800-.500 1.300-1.500 1.300 1 0 1.500 .500 1.500 1.300v1.900c0 1.200 .500 1.800 2.100 1.800" stroke="#5A5A5A"/><path d="M994 72.700c1.600 0 2.100 .600 2.100 1.800v1.900c0 .800 .500 1.300 1.500 1.300-1 0-1.500 .500-1.500 1.300v1.900c0 1.200-.500 1.800-2.100 1.800" stroke="#5A5A5A"/><path d="M1010.500 40l2.500-3 2.500 3z" fill="#C0C0C0"/><path d="M1010.5 57.0h5l-2.5 3.0z" fill="#555"/><path d="M1010 74.500h6" stroke="#555"/><path d="M1010.5 77.0h5l-2.5 3.0z" fill="#555"/><path d="M1043 33h11v11h-8v8h-11v-10h8z" fill="#EAC676"/><rect x="1031.500" y="29.500" width="11" height="11" fill="#fff" stroke="#6A6A6A"/><rect x="1046.500" y="44.500" width="11" height="11" fill="#fff" stroke="#6A6A6A"/><path d="M1043.9 82.0h5l-2.5 3.0z" fill="#555"/><rect x="1079.500" y="30.500" width="25.500" height="25.500" rx="6.500" fill="#F4F1F4" stroke="#C4C4C4"/><rect x="1096" y="44" width="12" height="15" fill="#F1F1F1" opacity=".75"/><path d="M1108.300 36.300v4.500l-6.300 8.200-3.700-3.500z" fill="#B1B1B1"/><path d="M1097.300 46.300l3.700 3.500-1.300 1.500-3.700-3.500z" fill="#B1B1B1"/><path d="M1085.700 58.700c4.300-2.700 6.300-6.200 8.800-8.400 1.500-1 3.500-.5 4.500 1.200 1 2.500 0 5.500-2.500 7.200z" fill="#B1B1B1"/><path d="M1092.500 54c1.500-.5 3.500 1 4 2.800" stroke="#E4E4E4" stroke-width="1"/><path d="M1091.7 82.0h5l-2.5 3.0z" fill="#BCBCBC"/><path d="M1129.800 29.800l5.800 4.800-5.300 4.300-5.800-4.900z" fill="#FAFAFA" stroke="#B1B1B1"/><path d="M1128 32.500v-3.500c0-2 3.500-2 3.500 0v2" stroke="#B1B1B1"/><path d="M1135.800 33c1.800 1 2.800 2.600 2 4.600-1.300-1-2-2.300-2.600-3.800z" fill="#B1B1B1"/><rect x="1122" y="39.500" width="16" height="3" fill="#DCDCDC"/><path d="M1193.1 34.0h5l-2.5 3.0z" fill="#BCBCBC"/><path d="M1133 50.500h-10.500v10h3.500" stroke="#B1B1B1"/><path d="M1135 50.800l2.400 2.400-7.600 7.200-3.300 .8 1-3.200z" fill="#B1B1B1"/><path d="M1133.300 52.500l2.400 2.400" stroke="#F1F1F1" stroke-width=".7"/><path d="M1193.1 57.0h5l-2.5 3.0z" fill="#BCBCBC"/><path d="M1123 85.500l1.500 1.500h9l3-8.500-1-2z" fill="#B1B1B1"/><path d="M1126.500 76.500h8c1 0 1.500 .7 1.200 1.500l-2 5.500c-.3 .8-1 1.200-2 1.200h-8c-1 0-1.500-.7-1.200-1.500l2-5.500c.3-.8 1-1.200 2-1.200z" fill="#F4F1F4" stroke="#B1B1B1"/><path d="M1193.1 80.2h5l-2.5 3.0z" fill="#BCBCBC"/><path d="M1198.5 109V103.5H1204" fill="none" stroke="#B0B0B0"/><path d="M1205 106v4h-4z" fill="#B0B0B0"/><path d="M1201 106l3 3" stroke="#B0B0B0"/><circle cx="1226.900" cy="33.600" r="3.600" stroke="#2E75B6" stroke-width="1.800"/><path d="M1224.200 36.300l-5.400 4.400" stroke="#2E75B6" stroke-width="2.400"/><g font-family="Liberation Sans,sans-serif" font-size="10.500" fill="#444"><text x="1216.600" y="58">ab</text><text x="1221.800" y="64.900">a</text></g><text x="1227.600" y="64.900" font-family="Liberation Sans,sans-serif" font-size="10.500" fill="#2E75B6">c</text><path d="M1218 59.500v3h3M1219.800 60.800l1.700 1.700-1.700 1.700" stroke="#2E75B6" stroke-width="1.100"/><path d="M1269.9 57.0h5l-2.5 3.0z" fill="#555"/><path d="M1221.500 73.500v12.600l3-2.800 2.400 5 1.700-.8-2.400-5h4.200z" fill="#fff" stroke="#444" stroke-width="1"/><path d="M1264.1 80.0h5l-2.5 3.0z" fill="#555"/><path d="M1346.500 108.500l4.500-4.500 4.500 4.500" stroke="#555" stroke-width="1.600"/><rect x="5" y="121" width="14" height="14" rx="1.200" fill="#54799F"/><rect x="7.500" y="122" width="9.500" height="5.300" fill="#E9E9E9"/><rect x="7.800" y="130" width="8.600" height="4.200" fill="#E9E9E9"/><rect x="9.800" y="131.500" width="2.200" height="2.700" fill="#54799F"/><path d="M35.500 125h7c6.700 0 6.700 7.700-.4 8.400" stroke="#2E75B6" stroke-width="2.100"/><path d="M39.300 121.200l-4.300 3.800 4.300 3.800" stroke="#2E75B6" stroke-width="2.400"/><path d="M54.0 126.0h5l-2.5 3.0z" fill="#555"/><rect x="73.500" y="121.500" width="14" height="12" fill="#fff" stroke="#6A6A6A"/><text x="75.500" y="128.500" font-size="7" font-weight="bold" fill="#2E75B6" font-family="Liberation Sans,sans-serif">A</text><path d="M81.500 125.500h4.500M81.500 127.500h4.500M75.500 130.500h10.500" stroke="#A0A0A0"/><circle cx="104.500" cy="126" r="5.500" fill="#fff" stroke="#2E75B6"/><path d="M95.500 123.500h9v8h-9z" fill="#E6E6E6" stroke="#2E75B6" stroke-width="1.300"/><path d="M104.500 124.500l5 5-5 5-5-5z" fill="#fff" stroke="#2E75B6"/><path d="M114.8 126.0h5l-2.5 3.0z" fill="#555"/><path d="M143 122.500h4M136.500 125l3-2.500M136.500 128.500v3M139 132.500h8.500M149 124l-4 3.500M146 129l2.500 2.500" stroke="#B1B1B1"/><g fill="#ADADAD"><rect x="139" y="121" width="3" height="3"/><rect x="148" y="121" width="3" height="3"/><rect x="135" y="125" width="3" height="3"/><rect x="143" y="126" width="3" height="3"/><rect x="135" y="132" width="3" height="3"/><rect x="148" y="132" width="3" height="3"/></g><circle cx="162.800" cy="125.900" r="5.500" stroke="#B1B1B1" fill="#EFEDEF"/><circle cx="167" cy="129.800" r="5.500" stroke="#B1B1B1" fill="#EFEDEF" fill-opacity=".6"/><circle cx="162.800" cy="125.900" r="5.500" stroke="#B1B1B1" fill="none"/><path d="M177.1 126.0h5l-2.5 3.0z" fill="#BCBCBC"/><path d="M200.500 120.500v14" stroke="#6A6A6A"/><rect x="202.500" y="121.500" width="5" height="2" fill="#fff" stroke="#6A6A6A" stroke-width=".8"/><rect x="202" y="125" width="9" height="4" fill="#EAC676"/><path d="M203 132.500h6M205.700 129.800l-2.700 2.700 2.700 2.700" stroke="#2E75B6" stroke-width="1.500"/><path d="M217.1 126.0h5l-2.5 3.0z" fill="#555"/><rect x="240" y="123" width="9" height="9" fill="#D8D8D8"/><path d="M242 120.500h-4.500v4.500M247 134.500h4.500v-4.500" stroke="#B1B1B1"/><rect x="270" y="124" width="8" height="8" fill="#D8D8D8"/><rect x="266.500" y="120.500" width="5" height="5" fill="#EFEFEF" stroke="#B1B1B1"/><rect x="275.500" y="129.500" width="5" height="5" fill="#EFEFEF" stroke="#B1B1B1"/><rect x="306.500" y="120.500" width="4" height="15" fill="#F4F1F4" stroke="#B1B1B1"/><path d="M298 121v3.500M295.500 123.500l2.500-2.700 2.500 2.700M298 135.500v-3.500M295.500 132.500l2.500 2.700 2.500-2.700" stroke="#B1B1B1" stroke-width="1.500"/><rect x="296.500" y="126.500" width="3" height="3" stroke="#B1B1B1" fill="#F4F1F4"/><path d="M301 120.500h5M301 135.500h5" stroke="#B1B1B1" stroke-dasharray="1 1"/><path d="M328.100 121.100l5.300 4.800-4.800 4.800-4.500-4.300z" fill="#F4F1F4" stroke="#B1B1B1"/><path d="M327 124.500v-3c0-2 3-2 3 0v2" stroke="#B1B1B1"/><path d="M333.600 124c1.500 .8 2.200 2 1.800 3.500-1-.6-1.600-1.600-2-2.800z" fill="#B1B1B1"/><path d="M339.800 124.300v2.700l-3.600 4.700-1.800-1.800z" fill="#B1B1B1"/><path d="M333.800 130.400l2 1.900c-.5 2-3 3.400-8 3.400 2.200-1.200 3.200-2.600 4-4 .600-.900 1.200-1.300 2-1.300z" fill="#B1B1B1"/><path d="M360.500 121.100l5.800 4.900-5.300 5.600-5.700-5.100z" fill="#F4F1F4" stroke="#B1B1B1"/><path d="M359 124.500v-3c0-2 3.200-2 3.200 0v2.300" stroke="#B1B1B1"/><path d="M366.300 124.300c2.200 1 3.200 3 2.600 5.500-1.400-.8-2.200-2.200-2.800-4z" fill="#B1B1B1"/><path d="M374.0 126.0h5l-2.5 3.0z" fill="#BCBCBC"/><path d="M404 120.500h-10.500v10h3.500" stroke="#B1B1B1"/><path d="M405.500 121.300l2.400 2.400-7.600 7.200-3.300 .8 1-3.200z" fill="#B1B1B1"/><path d="M403.800 123l2.400 2.400" stroke="#E6E6E6" stroke-width=".7"/><path d="M414.0 126.0h5l-2.5 3.0z" fill="#BCBCBC"/><path d="M426 121.500h15" stroke="#C4C4C4"/><path d="M426 124.500h15" stroke="#B1B1B1"/><path d="M426 128h15" stroke="#B1B1B1" stroke-width="2"/><path d="M426 132.500h15" stroke="#B1B1B1" stroke-width="3"/><path d="M445.7 126.0h5l-2.5 3.0z" fill="#BCBCBC"/><g shape-rendering="crispEdges"><path d="M466 123.500h15" stroke="#B1B1B1"/><path d="M466 126.500h15" stroke="#B1B1B1" stroke-dasharray="1 1"/><path d="M466 129.500h15" stroke="#B1B1B1" stroke-dasharray="3 1"/><path d="M466 132.500h15" stroke="#B1B1B1" stroke-dasharray="1 2 3 2"/></g><rect x="495.500" y="120.500" width="6.500" height="6" stroke="#6A6A6A" stroke-width="1.100"/><rect x="495.500" y="129.500" width="6.500" height="6" stroke="#6A6A6A" stroke-width="1.100"/><rect x="501" y="122" width="7" height="7" fill="#EAC676"/><path d="M504.500 123.500v10l2.300-2.100 1.800 3.800 1.400-.600-1.800-3.800h3.200z" fill="#fff" stroke="#444" stroke-width="1"/><rect x="524.500" y="121.500" width="12" height="12" fill="#fff" stroke="#8A8A8A"/><path d="M527 127.500l2.500 3 5-6.500" stroke="#444" stroke-width="1.200"/><path d="M608.500 125h-7c-6.700 0-6.700 7.700 .4 8.400" stroke="#2E75B6" stroke-width="2.100"/><path d="M604.700 121.200l4.300 3.800-4.300 3.800" stroke="#2E75B6" stroke-width="2.400"/><path d="M629 125.500h5" stroke="#F3F3F3"/><path d="M629 128h5l-2.500 3z" fill="#F3F3F3"/><path d="M9.700 146.700h7.800l3.800 3.800v10.800h-11.600z" fill="#fff" stroke="#5A5A5A" stroke-width="1.200"/><path d="M17.500 146.700v3.800h3.800" stroke="#5A5A5A" stroke-width="1.200"/><path d="M17 153.500h3M17 155.500h3M17 157.500h3" stroke="#C8C8C8"/><circle cx="11.400" cy="154.500" r="4.300" fill="#fff" stroke="#6A6A6A" stroke-width="1.100"/><path d="M11.500 152v2.500" stroke="#E8602C" stroke-width="1.200"/><path d="M11 154.700h3" stroke="#2E8AD8" stroke-width="1.200"/><rect x="41.500" y="150" width="7" height="9.800" fill="#fff" stroke="#D35230" stroke-width=".9"/><path d="M42 152.500h2.500M42 155.500h4.500M42 157.500h4.500" stroke="#D35230"/><circle cx="47.100" cy="148" r="2" fill="#D35230"/><path d="M33.200 148.400l8.400-2.300v15.700l-8.400-1.300z" fill="#D35230"/><text x="34.600" y="158" font-size="10" font-weight="bold" fill="#fff" font-family="Liberation Sans,sans-serif">P</text><path d="M149 149.500l10 10M159 149.500l-10 10" stroke="#555" stroke-width="1.100"/><g fill="#555"><rect x="171" y="149.500" width="2" height="2"/><rect x="171" y="153.500" width="2" height="2"/><rect x="171" y="157.500" width="2" height="2"/></g><path d="M194.200 147.500v12M188.200 153.500h12" stroke="#444" stroke-width="1.500"/><path d="M1226.500 155l6 5.300" stroke="#7A7A7A" stroke-width="1.500"/><path d="M1225.7 145.4L1226.0 149.9L1230.0 151.8L1225.8 153.5L1225.2 157.9L1222.3 154.5L1217.9 155.3L1220.3 151.5L1218.2 147.5L1222.5 148.6z" fill="#C9DBEA" stroke="#727A82" stroke-width="1"/><circle cx="1223.300" cy="151.300" r="1.300" fill="#fff"/><path d="M1230 148.500l.8-.6M1217.500 151.500l-1 .2M1220.500 157.500l-.8 .4M1223.500 145.500l-.3-.6" stroke="#9AA" stroke-width=".6"/><circle cx="1252.9" cy="153.6" r="4.600" stroke="#EE6B47" stroke-width="3.200" fill="none"/><path d="M1257.40 153.60L1259.80 153.60M1255.15 157.50L1256.35 159.58M1250.65 157.50L1249.45 159.58M1248.40 153.60L1246.00 153.60M1250.65 149.70L1249.45 147.62M1255.15 149.70L1256.35 147.62" stroke="#EE6B47" stroke-width="2.700"/><rect x="1277.900" y="147.600" width="9.500" height="6.800" fill="#ECECEC" stroke="#5A5A5A" stroke-width="1.100"/><rect x="1274.600" y="151" width="9.900" height="7.400" fill="#fff" stroke="#5A5A5A" stroke-width="1.100"/><path d="M1274.100 151h10.900" stroke="#5A5A5A" stroke-width="1.800"/><rect x="1355" y="142" width="12" height="59" rx="3" fill="#4A4A4A"/><path d="M1359 149.5h5M1359 151.5h5M1359 153.5h5M1359 155.5h5M1359 157.5h5M1359 159.5h5" stroke="#2E2E2E"/><path d="M1359 163.5h5M1359 165.5h5M1359 167.5h5M1359 169.5h5M1359 171.5h5M1359 173.5h5M1359 175.5h5M1359 177.5h5M1359 179.5h5" stroke="#E8C56A"/><path d="M1359 181.5h5M1359 183.5h5M1359 185.5h5" stroke="#8A8A8A"/><path d="M1359 187.5h5M1359 189.5h5M1359 191.5h5M1359 193.5h5M1359 195.5h5" stroke="#5B9BD5"/><path d="M1356 162.500l3-3h5" stroke="#3A78B5" stroke-width="1.200"/><path d="M1045.500 502.500v16l3.700-3.500 2.800 6 2.200-1-2.800-5.800h5z" fill="#fff" stroke="#000" stroke-width="1"/></svg></body></html>
